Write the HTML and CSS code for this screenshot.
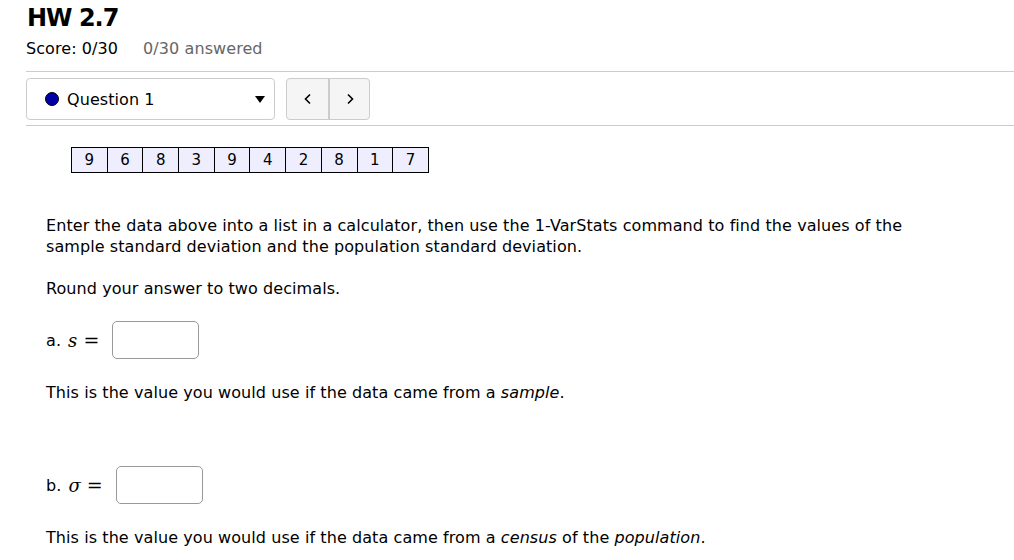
FILE: index.html
```html
<!DOCTYPE html>
<html>
<head>
<meta charset="utf-8">
<link rel="stylesheet" href="styles.css">
</head>
<body>
<div class="page">
  <h1 class="title">HW 2.7</h1>
  <div class="score-row">
    <span class="score">Score: 0/30</span>
    <span class="answered">0/30 answered</span>
  </div>
  <div class="nav-bar">
    <div class="qselect">
      <span class="dot"></span>
      <span class="qlabel">Question 1</span>
      <span class="caret"></span>
    </div>
    <div class="navbtns">
      <button class="navbtn" type="button">
        <svg width="10" height="12" viewBox="0 0 10 12"><path d="M7 1.5 L2.5 6 L7 10.5" fill="none" stroke="#000" stroke-width="1.6"/></svg>
      </button>
      <button class="navbtn" type="button">
        <svg width="10" height="12" viewBox="0 0 10 12"><path d="M3 1.5 L7.5 6 L3 10.5" fill="none" stroke="#000" stroke-width="1.6"/></svg>
      </button>
    </div>
  </div>
  <div class="question">
    <table class="data">
      <tr><td>9</td><td>6</td><td>8</td><td>3</td><td>9</td><td>4</td><td>2</td><td>8</td><td>1</td><td>7</td></tr>
    </table>
    <p class="intro">Enter the data above into a list in a calculator, then use the 1-VarStats command to find the values of the sample standard deviation and the population standard deviation.</p>
    <p class="round">Round your answer to two decimals.</p>
    <div class="answer a">a. <span class="math">s</span> <span class="eq">=</span> <span class="box"></span></div>
    <p class="note">This is the value you would use if the data came from a <em>sample</em>.</p>
    <div class="answer b">b. <span class="math">σ</span> <span class="eq">=</span> <span class="box"></span></div>
    <p class="note">This is the value you would use if the data came from a <em>census</em> of the <em>population</em>.</p>
  </div>
</div>
</body>
</html>
```

FILE: styles.css
```css
html, body {
  margin: 0;
  padding: 0;
  background: #fff;
}
body {
  font-family: "DejaVu Sans", "Noto Sans", sans-serif;
  font-size: 16px;
  letter-spacing: 0.08px;
  color: #000;
  overflow: hidden;
}
.page {
  padding-left: 26px;
}
.title {
  margin: 0;
  padding-top: 2px;
  font-size: 24px;
  font-weight: bold;
  letter-spacing: -1px;
  line-height: 32px;
  padding-left: 1px;
}
.score-row {
  margin-top: 4px;
  display: flex;
  gap: 25px;
  font-size: 16px;
  line-height: 22px;
}
.answered {
  color: #666;
}
.nav-bar {
  margin-top: 11px;
  border-top: 1px solid #ccc;
  border-bottom: 1px solid #ccc;
  padding: 6px 0 5px 0;
  display: flex;
  gap: 11px;
}
.qselect {
  border: 1px solid #ccc;
  border-radius: 4px;
  display: flex;
  align-items: center;
  padding-left: 18px;
  padding-right: 9px;
  box-sizing: border-box;
  width: 249px;
  height: 42px;
}
.dot {
  width: 14px;
  height: 14px;
  border-radius: 50%;
  background: #0000a8;
  border: 1px solid #000;
  box-sizing: border-box;
  margin-right: 8px;
}
.qlabel {
  flex: 1;
}
.caret {
  width: 0;
  height: 0;
  border-left: 5px solid transparent;
  border-right: 5px solid transparent;
  border-top: 7px solid #000;
}
.navbtns {
  display: flex;
  border: 1px solid #ccc;
  border-radius: 4px;
  background: #f5f5f5;
  height: 42px;
  box-sizing: border-box;
  overflow: hidden;
}
.navbtn {
  width: 41px;
  height: 40px;
  border: 0;
  background: transparent;
  padding: 0;
  display: flex;
  align-items: center;
  justify-content: center;
}
.navbtn + .navbtn {
  border-left: 2px solid #ccc;
}
.question {
  padding-left: 20px;
}
.data {
  border-collapse: collapse;
  table-layout: fixed;
  width: 358px;
  margin-top: 21px;
  margin-left: 25px;
  background: #eef;
}
.data td {
  border: 1px solid #000;
  height: 24px;
  padding: 0;
  text-align: center;
  font-size: 15px;
  line-height: 24px;
}
.intro {
  margin: 42px 0 0 0;
  line-height: 21px;
  width: 880px;
}
.round {
  margin: 21px 0 0 0;
  line-height: 21px;
}
.answer {
  margin-top: 22px;
  display: flex;
  align-items: center;
  line-height: 21px;
}
.math {
  font-family: "DejaVu Serif", serif;
  font-style: italic;
  font-size: 18px;
  margin-left: 7px;
}
.eq {
  font-family: "DejaVu Serif", serif;
  font-size: 19px;
  margin: 0 13px 0 6px;
}
.box {
  width: 87px;
  height: 38px;
  border: 1px solid #999;
  border-radius: 5px;
  box-sizing: border-box;
  display: inline-block;
}
.note {
  margin: 23px 0 0 0;
  line-height: 21px;
}
.note + .answer {
  margin-top: 63px;
}
```
